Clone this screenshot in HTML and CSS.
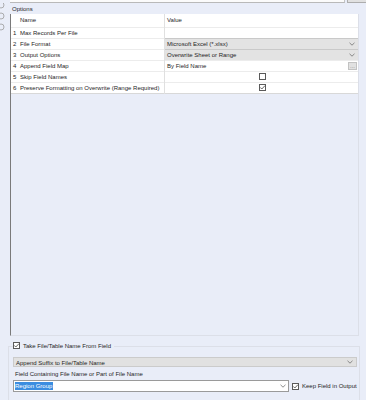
FILE: index.html
```html
<!DOCTYPE html>
<html lang="en">

<head>
    <meta charset="UTF-8">
    <title>Output Options</title>
    <link rel="stylesheet" href="styles.css">
</head>

<body>
    <div class="topbar">
        <div class="top-input"></div>
        <div class="top-btn"></div>
    </div>

    <div class="main">
        <div class="rail">
            <svg width="10" height="40" viewBox="0 0 10 40">
                <circle cx="1" cy="2" r="3" fill="none" stroke="#9a9a9a" stroke-width="0.8"/>
                <circle cx="1" cy="13" r="3" fill="none" stroke="#9a9a9a" stroke-width="0.8"/>
                <circle cx="1" cy="24" r="3" fill="none" stroke="#9a9a9a" stroke-width="0.8"/>
            </svg>
        </div>
        <div class="options">
            <div class="legend">Options</div>
            <div class="panel">
                <table class="grid">
                    <tr class="head">
                        <td class="num"></td>
                        <td class="name">Name</td>
                        <td class="value">Value</td>
                    </tr>
                    <tr>
                        <td class="num">1</td>
                        <td class="name">Max Records Per File</td>
                        <td class="value"></td>
                    </tr>
                    <tr>
                        <td class="num">2</td>
                        <td class="name">File Format</td>
                        <td class="value combo">Microsoft Excel (*.xlsx)<svg class="chev" width="6" height="4" viewBox="0 0 6 4"><path d="M0.5 0.8 L3 3.2 L5.5 0.8" fill="none" stroke="#707070" stroke-width="0.8"/></svg></td>
                    </tr>
                    <tr>
                        <td class="num">3</td>
                        <td class="name">Output Options</td>
                        <td class="value combo">Overwrite Sheet or Range<svg class="chev" width="6" height="4" viewBox="0 0 6 4"><path d="M0.5 0.8 L3 3.2 L5.5 0.8" fill="none" stroke="#707070" stroke-width="0.8"/></svg></td>
                    </tr>
                    <tr>
                        <td class="num">4</td>
                        <td class="name">Append Field Map</td>
                        <td class="value">By Field Name<span class="dots">...</span></td>
                    </tr>
                    <tr>
                        <td class="num">5</td>
                        <td class="name">Skip Field Names</td>
                        <td class="value center"><span class="check"></span></td>
                    </tr>
                    <tr>
                        <td class="num">6</td>
                        <td class="name">Preserve Formatting on Overwrite (Range Required)</td>
                        <td class="value center">
                            <span class="check">
                                <svg width="7" height="7" viewBox="0 0 7 7"><path d="M1.2 3.4 L2.8 5 L6 1.6" fill="none" stroke="#555" stroke-width="0.9"/></svg>
                            </span>
                        </td>
                    </tr>
                </table>
            </div>
        </div>
    </div>

    <div class="fieldbox">
        <div class="fieldbox-legend">
            <span class="check">
                <svg width="7" height="7" viewBox="0 0 7 7"><path d="M1.2 3.4 L2.8 5 L6 1.6" fill="none" stroke="#555" stroke-width="0.9"/></svg>
            </span>
            <span>Take File/Table Name From Field</span>
        </div>
        <div class="select">Append Suffix to File/Table Name<svg class="chev" width="6" height="4" viewBox="0 0 6 4"><path d="M0.5 0.8 L3 3.2 L5.5 0.8" fill="none" stroke="#707070" stroke-width="0.8"/></svg></div>
        <div class="label">Field Containing File Name or Part of File Name</div>
        <div class="field-row">
            <div class="input"><span class="selected">Region Group</span><svg class="chev" width="6" height="4" viewBox="0 0 6 4"><path d="M0.5 0.8 L3 3.2 L5.5 0.8" fill="none" stroke="#707070" stroke-width="0.8"/></svg></div>
            <span class="check">
                <svg width="7" height="7" viewBox="0 0 7 7"><path d="M1.2 3.4 L2.8 5 L6 1.6" fill="none" stroke="#555" stroke-width="0.9"/></svg>
            </span>
            <span class="keep">Keep Field in Output</span>
        </div>
    </div>
</body>

</html>
```

FILE: styles.css
```css
body {
    font-family: "Liberation Sans", Arial, sans-serif;
    font-size: 6px;
    color: #1e1e1e;
    background-color: #e9edf8;
    margin: 0;
    padding: 0;
    width: 366px;
    height: 400px;
    overflow: hidden;
}

.topbar {
    display: flex;
    height: 3px;
    padding-left: 10px;
    overflow: hidden;
}

.top-input {
    flex: 1;
    background-color: #fbfbfb;
    border-bottom: 1px solid #b9b9b9;
    border-right: 1px solid #c4c4c4;
}

.top-btn {
    width: 18px;
    margin-left: 2px;
    background-color: #e1e1e1;
    border-bottom: 1px solid #adadad;
    border-left: 1px solid #adadad;
}

.main {
    display: flex;
}

.rail {
    width: 10px;
    overflow: hidden;
}

.rail svg {
    display: block;
}

.options {
    width: 349px;
}

.legend {
    height: 11px;
    line-height: 13px;
    padding-left: 2px;
}

.panel {
    height: 322px;
    border-left: 1px solid #7a7a7a;
    border-right: 1px solid #dcdfe8;
    border-bottom: 1px solid #dcdfe8;
    box-sizing: border-box;
}

.grid {
    width: 100%;
    border-collapse: collapse;
    background-color: #fff;
    table-layout: fixed;
    border-bottom: 1px solid #d8d8d8;
}

.grid td {
    height: 10px;
    padding: 0;
    border-top: 1px solid #ececec;
    white-space: nowrap;
    overflow: hidden;
    line-height: 10px;
}

.grid .head td {
    height: 11px;
    border-top: none;
    line-height: 13px;
}

.num {
    width: 8px;
    padding-left: 2px !important;
    box-sizing: border-box;
}

.name {
    width: 144px;
    padding-left: 1px !important;
    border-right: 1px solid #e0e0e0;
}

.value {
    position: relative;
    padding-left: 2px !important;
}

.combo {
    background-color: #e3e3e3;
    border-top: 1px solid #c9c9c9 !important;
}

.chev {
    position: absolute;
    right: 3px;
    top: 3px;
}

.dots {
    position: absolute;
    right: 1px;
    top: 1px;
    width: 9px;
    height: 8px;
    line-height: 6px;
    text-align: center;
    color: #888;
    background-color: #e1e1e1;
    border: 1px solid #c2c2c2;
    box-sizing: border-box;
}

.center {
    text-align: center;
}

.check {
    display: inline-block;
    width: 7px;
    height: 7px;
    border: 1px solid #5a5a5a;
    background-color: #fff;
    box-sizing: border-box;
    vertical-align: middle;
    position: relative;
}

.check svg {
    position: absolute;
    left: -1px;
    top: -1px;
}

.grid .check {
    margin-top: -1px;
}

.fieldbox {
    margin: 10px 6px 0 8px;
    border: 1px solid #dcdfe8;
    border-bottom: none;
    height: 52px;
    position: relative;
    padding: 10px 2px 0 4px;
}

.fieldbox-legend {
    position: absolute;
    top: -5px;
    left: 4px;
    display: flex;
    align-items: center;
    gap: 3px;
    padding-right: 3px;
    background-color: #e9edf8;
}

.select {
    position: relative;
    height: 10px;
    line-height: 10px;
    padding-left: 2px;
    background-color: #e1e1e1;
    border: 1px solid #cbcbcb;
    box-sizing: border-box;
}

.select .chev {
    top: 2px;
}

.label {
    margin-top: 3px;
    padding-left: 2px;
    height: 8px;
    line-height: 8px;
}

.field-row {
    display: flex;
    align-items: center;
    margin-top: 2px;
}

.input {
    position: relative;
    width: 276px;
    height: 12px;
    background-color: #fff;
    border: 1px solid #9a9a9a;
    box-sizing: border-box;
    padding: 1px 1px;
    line-height: 8px;
}

.selected {
    display: inline-block;
    background-color: #3b8de0;
    color: #fff;
    padding-right: 1px;
}

.input .chev {
    right: 2px;
    top: 3px;
}

.field-row .check {
    margin-left: 3px;
}

.keep {
    margin-left: 3px;
}
```
